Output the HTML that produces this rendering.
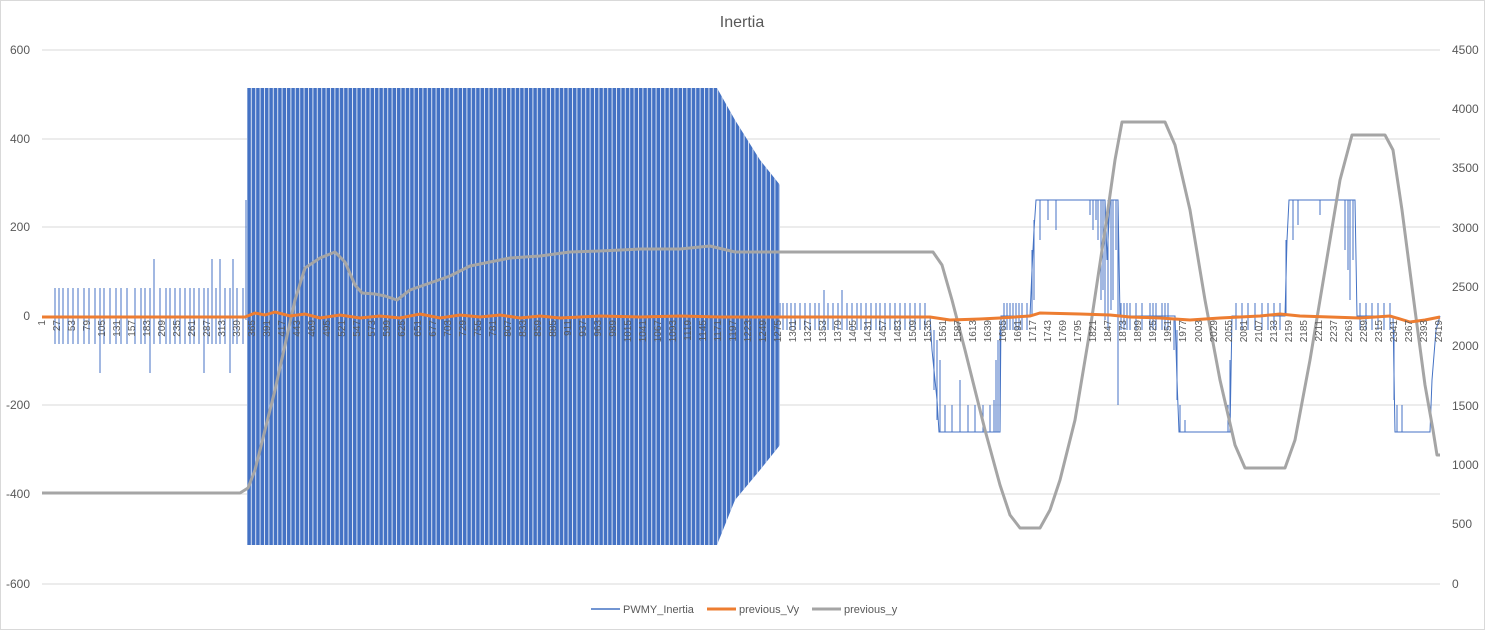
<!DOCTYPE html>
<html><head><meta charset="utf-8"><style>
html,body{margin:0;padding:0;background:#fff}
body{width:1485px;height:630px;overflow:hidden;font-family:"Liberation Sans",sans-serif}
</style></head><body>
<svg width="1485" height="630" viewBox="0 0 1485 630" xmlns="http://www.w3.org/2000/svg" font-family="Liberation Sans, sans-serif">
<defs>
<pattern id="gap" width="4.4" height="10" patternUnits="userSpaceOnUse">
<rect x="0" y="0" width="1" height="10" fill="#fff" opacity="0.8"/>
</pattern>
</defs>
<rect x="0.5" y="0.5" width="1484" height="629" fill="#fff" stroke="#d9d9d9"/>
<text x="742" y="27" text-anchor="middle" font-size="16" fill="#595959">Inertia</text>
<g stroke="#d9d9d9" stroke-width="1">
<line x1="42" y1="50" x2="1440" y2="50"/><line x1="42" y1="139" x2="1440" y2="139"/>
<line x1="42" y1="227" x2="1440" y2="227"/><line x1="42" y1="405" x2="1440" y2="405"/>
<line x1="42" y1="494" x2="1440" y2="494"/><line x1="42" y1="584" x2="1440" y2="584"/>
</g>
<g font-size="12" fill="#595959" text-anchor="end">
<text x="30" y="54">600</text><text x="30" y="143">400</text><text x="30" y="231">200</text>
<text x="30" y="320">0</text><text x="30" y="409">-200</text><text x="30" y="498">-400</text><text x="30" y="588">-600</text>
</g>
<g font-size="12" fill="#595959" text-anchor="start">
<text x="1452" y="54">4500</text><text x="1452" y="113">4000</text><text x="1452" y="172">3500</text>
<text x="1452" y="232">3000</text><text x="1452" y="291">2500</text><text x="1452" y="350">2000</text>
<text x="1452" y="410">1500</text><text x="1452" y="469">1000</text><text x="1452" y="528">500</text><text x="1452" y="588">0</text>
</g>
<polygon points="247,88 717,88 735,120 760,160 780,185 780,445 760,470 735,500 717,545 247,545" fill="#4472C4"/>
<polygon points="247,88 717,88 735,120 760,160 780,185 780,445 760,470 735,500 717,545 247,545" fill="url(#gap)"/>
<g stroke="#4472C4" stroke-width="1" fill="none">
<path d="M55 288V344M59 288V344M63 288V344M68 288V344M73 288V344M78 288V344M84 288V344M89 288V344M95 288V344M100 288V373M104 288V344M110 288V344M116 288V344M121 288V344M127 288V344M135 288V344M141 288V344M145 288V344M150 288V373M154 259V344M160 288V344M166 288V344M170 288V344M175 288V344M180 288V344M185 288V344M190 288V344M194 288V344M199 288V344M204 288V373M208 288V344M212 259V344M216 288V344M220 259V344M225 288V344M230 288V373M233 259V344M237 288V344M243 288V344M246 200V320"/>
<path d="M780 316V303M783 330V303M787 330V303M791 303V330M795 303V330M800 303V330M805 303V330M810 330V303M815 303V330M819 303V330M824 290V330M828 303V330M833 303V330M838 303V330M842 290V330M847 303V330M852 303V330M857 303V330M861 303V330M866 303V330M871 303V330M876 303V330M880 303V330M885 303V330M890 303V330M895 303V330M900 303V330M905 303V330M910 303V330M915 303V330M920 303V330M925 303V330"/>
<polyline points="925,316 930,316 932,350 935,380 937,400 939,432 1000,432 1001,316 1030,316 1032,270 1034,230 1036,200 1105,200 1107,260 1110,200 1118,200 1120,316 1175,316 1177,380 1179,432 1230,432 1232,316 1285,316 1287,240 1289,200 1355,200 1357,316 1393,316 1395,432 1430,432 1432,380 1436,330 1440,316"/>
<path d="M934 330V390M937 340V420M940 360V432M945 432V405M952 432V405M960 432V380M968 432V405M975 432V405M983 432V405M990 432V405M994 432V400M996 432V360M998 432V340M1000 430V330M1004 303V330M1007 303V330M1010 303V330M1013 303V330M1016 303V330M1019 303V330M1022 303V330M1027 303V330M1032 316V250M1034 300V220M1040 200V240M1048 200V220M1056 200V230M1090 200V215M1093 200V230M1096 200V220M1098 200V240M1101 200V300M1103 200V290M1105 200V320M1108 200V330M1111 200V310M1113 200V300M1116 200V250M1118 200V405M1121 303V330M1124 303V330M1127 303V330M1130 303V330M1136 303V330M1142 303V330M1150 303V330M1153 303V330M1156 303V330M1162 303V330M1165 303V330M1168 303V330M1174 320V350M1177 330V400M1180 432V405M1185 432V420M1228 432V405M1230 432V360M1236 303V330M1242 303V330M1248 303V330M1255 303V330M1262 303V330M1268 303V330M1274 303V330M1280 303V330M1286 316V240M1293 200V240M1298 200V225M1320 200V215M1345 200V250M1348 200V270M1350 200V300M1353 200V260M1360 303V330M1366 303V330M1372 303V330M1378 303V330M1384 303V330M1390 303V330M1394 330V400M1397 432V405M1402 432V405"/>
</g>
<polyline fill="none" stroke="#A5A5A5" stroke-width="3" stroke-linejoin="round" points="42,493 240,493 248,488 255,470 265,430 275,390 285,345 295,300 305,268 320,258 335,252 345,262 355,285 362,293 375,294 385,296 397,300 410,290 430,283 450,276 470,266 490,262 510,258 540,256 570,252 600,251 640,249 680,249 710,246 735,252 780,252 933,252 942,265 952,300 965,350 985,430 1000,485 1010,515 1020,528 1040,528 1050,510 1060,480 1075,420 1090,330 1105,230 1115,160 1122,122 1165,122 1175,145 1190,210 1205,300 1220,380 1235,445 1245,468 1285,468 1295,440 1310,360 1325,270 1340,180 1352,135 1385,135 1393,150 1402,210 1415,310 1425,385 1433,430 1437,455 1440,455"/>
<polyline fill="none" stroke="#ED7D31" stroke-width="3" points="42,317 245,317 255,313 265,315 275,312 290,316 305,314 320,318 340,315 360,318 380,316 400,318 420,314 440,318 460,315 480,317 500,315 520,318 540,316 560,318 600,316 640,317 680,316 720,317 780,317 930,317 950,320 980,319 1000,318 1030,316 1040,313 1080,314 1110,315 1130,317 1160,318 1190,320 1220,318 1260,316 1280,314 1300,316 1330,317 1360,318 1390,316 1410,322 1425,320 1440,317"/>
<g font-size="10" fill="#595959" text-anchor="end">
<text transform="translate(45,320) rotate(-90)">1</text><text transform="translate(60,320) rotate(-90)">27</text><text transform="translate(75,320) rotate(-90)">53</text><text transform="translate(90,320) rotate(-90)">79</text><text transform="translate(105,320) rotate(-90)">105</text><text transform="translate(120,320) rotate(-90)">131</text><text transform="translate(135,320) rotate(-90)">157</text><text transform="translate(150,320) rotate(-90)">183</text><text transform="translate(165,320) rotate(-90)">209</text><text transform="translate(180,320) rotate(-90)">235</text><text transform="translate(195,320) rotate(-90)">261</text><text transform="translate(210,320) rotate(-90)">287</text><text transform="translate(225,320) rotate(-90)">313</text><text transform="translate(240,320) rotate(-90)">339</text><text transform="translate(255,320) rotate(-90)">365</text><text transform="translate(270,320) rotate(-90)">391</text><text transform="translate(285,320) rotate(-90)">417</text><text transform="translate(300,320) rotate(-90)">443</text><text transform="translate(315,320) rotate(-90)">469</text><text transform="translate(330,320) rotate(-90)">495</text><text transform="translate(345,320) rotate(-90)">521</text><text transform="translate(360,320) rotate(-90)">547</text><text transform="translate(375,320) rotate(-90)">573</text><text transform="translate(390,320) rotate(-90)">599</text><text transform="translate(405,320) rotate(-90)">625</text><text transform="translate(421,320) rotate(-90)">651</text><text transform="translate(436,320) rotate(-90)">677</text><text transform="translate(451,320) rotate(-90)">703</text><text transform="translate(466,320) rotate(-90)">729</text><text transform="translate(481,320) rotate(-90)">755</text><text transform="translate(496,320) rotate(-90)">781</text><text transform="translate(511,320) rotate(-90)">807</text><text transform="translate(526,320) rotate(-90)">833</text><text transform="translate(541,320) rotate(-90)">859</text><text transform="translate(556,320) rotate(-90)">885</text><text transform="translate(571,320) rotate(-90)">911</text><text transform="translate(586,320) rotate(-90)">937</text><text transform="translate(601,320) rotate(-90)">963</text><text transform="translate(616,320) rotate(-90)">989</text><text transform="translate(631,320) rotate(-90)">1015</text><text transform="translate(646,320) rotate(-90)">1041</text><text transform="translate(661,320) rotate(-90)">1067</text><text transform="translate(676,320) rotate(-90)">1093</text><text transform="translate(691,320) rotate(-90)">1119</text><text transform="translate(706,320) rotate(-90)">1145</text><text transform="translate(721,320) rotate(-90)">1171</text><text transform="translate(736,320) rotate(-90)">1197</text><text transform="translate(751,320) rotate(-90)">1223</text><text transform="translate(766,320) rotate(-90)">1249</text><text transform="translate(781,320) rotate(-90)">1275</text><text transform="translate(796,320) rotate(-90)">1301</text><text transform="translate(811,320) rotate(-90)">1327</text><text transform="translate(826,320) rotate(-90)">1353</text><text transform="translate(841,320) rotate(-90)">1379</text><text transform="translate(856,320) rotate(-90)">1405</text><text transform="translate(871,320) rotate(-90)">1431</text><text transform="translate(886,320) rotate(-90)">1457</text><text transform="translate(901,320) rotate(-90)">1483</text><text transform="translate(916,320) rotate(-90)">1509</text><text transform="translate(931,320) rotate(-90)">1535</text><text transform="translate(946,320) rotate(-90)">1561</text><text transform="translate(961,320) rotate(-90)">1587</text><text transform="translate(976,320) rotate(-90)">1613</text><text transform="translate(991,320) rotate(-90)">1639</text><text transform="translate(1006,320) rotate(-90)">1665</text><text transform="translate(1021,320) rotate(-90)">1691</text><text transform="translate(1036,320) rotate(-90)">1717</text><text transform="translate(1051,320) rotate(-90)">1743</text><text transform="translate(1066,320) rotate(-90)">1769</text><text transform="translate(1081,320) rotate(-90)">1795</text><text transform="translate(1096,320) rotate(-90)">1821</text><text transform="translate(1111,320) rotate(-90)">1847</text><text transform="translate(1126,320) rotate(-90)">1873</text><text transform="translate(1141,320) rotate(-90)">1899</text><text transform="translate(1156,320) rotate(-90)">1925</text><text transform="translate(1171,320) rotate(-90)">1951</text><text transform="translate(1186,320) rotate(-90)">1977</text><text transform="translate(1202,320) rotate(-90)">2003</text><text transform="translate(1217,320) rotate(-90)">2029</text><text transform="translate(1232,320) rotate(-90)">2055</text><text transform="translate(1247,320) rotate(-90)">2081</text><text transform="translate(1262,320) rotate(-90)">2107</text><text transform="translate(1277,320) rotate(-90)">2133</text><text transform="translate(1292,320) rotate(-90)">2159</text><text transform="translate(1307,320) rotate(-90)">2185</text><text transform="translate(1322,320) rotate(-90)">2211</text><text transform="translate(1337,320) rotate(-90)">2237</text><text transform="translate(1352,320) rotate(-90)">2263</text><text transform="translate(1367,320) rotate(-90)">2289</text><text transform="translate(1382,320) rotate(-90)">2315</text><text transform="translate(1397,320) rotate(-90)">2341</text><text transform="translate(1412,320) rotate(-90)">2367</text><text transform="translate(1427,320) rotate(-90)">2393</text><text transform="translate(1442,320) rotate(-90)">2419</text>
</g>
<line x1="591" y1="609" x2="620" y2="609" stroke="#4472C4" stroke-width="1.5"/>
<text x="623" y="613" font-size="11" fill="#595959">PWMY_Inertia</text>
<line x1="707" y1="609" x2="736" y2="609" stroke="#ED7D31" stroke-width="3"/>
<text x="739" y="613" font-size="11" fill="#595959">previous_Vy</text>
<line x1="812" y1="609" x2="841" y2="609" stroke="#A5A5A5" stroke-width="3"/>
<text x="844" y="613" font-size="11" fill="#595959">previous_y</text>
</svg>
</body></html>
